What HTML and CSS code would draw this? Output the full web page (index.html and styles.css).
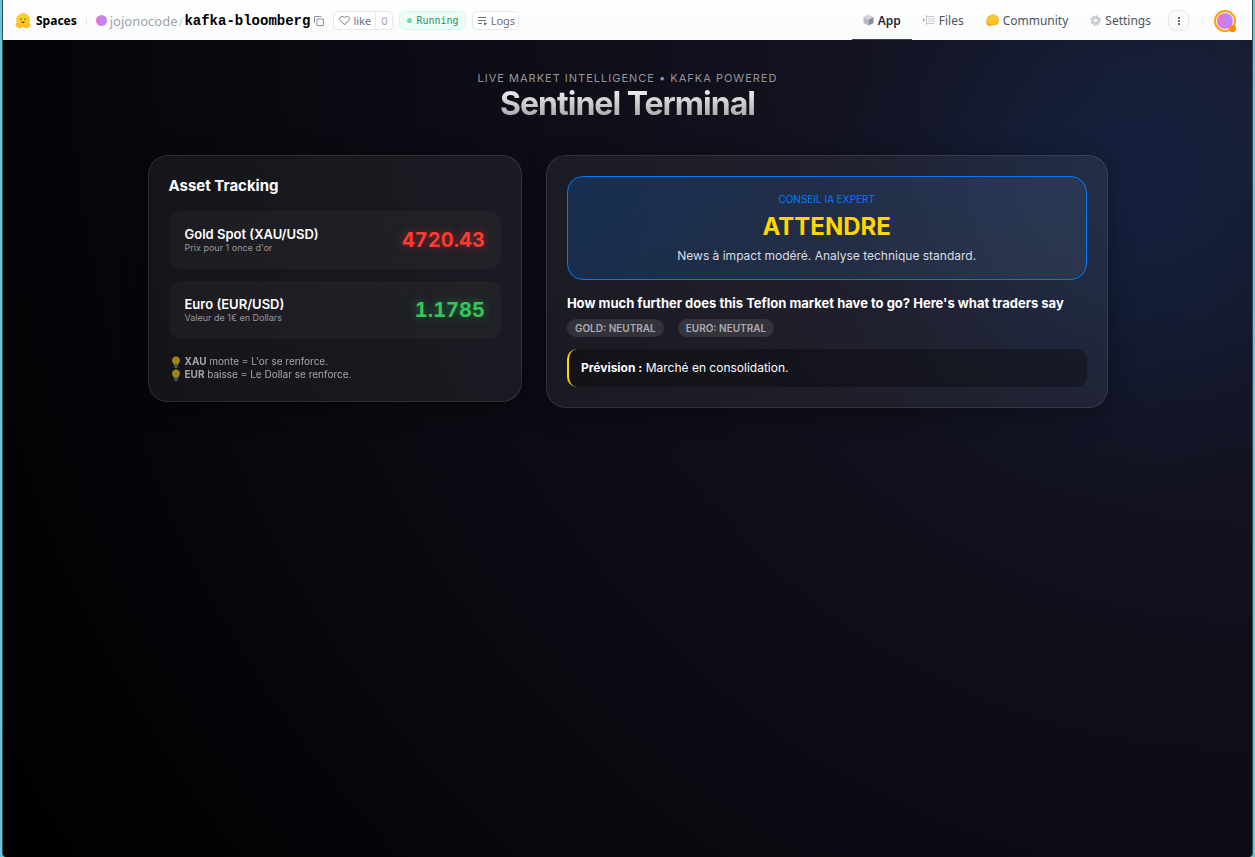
FILE: index.html
```
<!DOCTYPE html>
<html lang="fr">
<head>
    <meta charset="UTF-8">
    <meta name="viewport" content="width=device-width, initial-scale=1.0">
    <title>Sentinel Terminal</title>
    <link rel="stylesheet" href="styles.css">
</head>
<body>
<div class="window">
    <header class="topbar">
        <div class="repo">
            <a class="spaces" href="#">
                <svg width="16" height="16" viewBox="0 0 16 16">
                    <circle cx="8" cy="7" r="6.4" fill="#ffd21e" stroke="#ffad1f" stroke-width=".7"/>
                    <circle cx="5.9" cy="6" r=".8" fill="#3a3b45"/>
                    <circle cx="10.1" cy="6" r=".8" fill="#3a3b45"/>
                    <path d="M6 8.2Q8 9.2 10 8.2Q9.7 10.2 8 10.2T6 8.2" fill="#5a3030"/>
                    <path d="M1 10.4Q.4 12 1.2 12.6Q1.2 14.6 4.4 15Q7.4 15.2 7.2 12.8Q6.4 11.2 5 10.6L4.4 12L2.6 10Z" fill="#ffc02a" stroke="#ffa51c" stroke-width=".4"/>
                    <path d="M15 10.4Q15.6 12 14.8 12.6Q14.8 14.6 11.6 15Q8.6 15.2 8.8 12.8Q9.6 11.2 11 10.6L11.6 12L13.4 10Z" fill="#ffc02a" stroke="#ffa51c" stroke-width=".4"/>
                </svg>
                Spaces
            </a>
            <span class="divider"></span>
            <span class="owner-dot"></span>
            <a class="owner" href="#">jojonocode</a>
            <span class="slash">/</span>
            <a class="repo-name" href="#">kafka-bloomberg</a>
            <button class="copy" aria-label="Copy">
                <svg width="10" height="10" viewBox="0 0 10 10" fill="none" stroke="#8b93a1">
                    <path d="M3 3H9.5V9.5H3Z"/>
                    <path d="M1 7H.5V.5H7V1"/>
                </svg>
            </button>
            <div class="like">
                <button class="like-btn">
                    <svg width="11" height="11" viewBox="0 0 11 11" fill="none" stroke="#6b7280">
                        <path d="M5.5 9.8L1.3 5.6C.2 4.4.4 2.7 1.5 1.9C2.9.9 4.5 1.4 5.5 2.8C6.5 1.4 8.1.9 9.5 1.9C10.6 2.7 10.8 4.4 9.7 5.6Z"/>
                    </svg>
                    like
                </button>
                <button class="like-count">0</button>
            </div>
            <div class="running"><span class="dot"></span>Running</div>
            <button class="logs">
                <svg width="10" height="10" viewBox="0 0 10 10" fill="none" stroke="#6b7280">
                    <path d="M0 1.5H8M0 4.5H8M0 7.5H4"/>
                    <path d="M6 6V9.5L9.5 7.8Z" fill="#6b7280" stroke="none"/>
                </svg>
                Logs
            </button>
        </div>
        <nav class="tabs">
            <a class="tab active" href="#">
                <svg width="11" height="12" viewBox="0 0 11 12">
                    <path d="M5.5.5L10.5 3L5.5 5.8L.5 3Z" fill="#d1d5db"/>
                    <path d="M.5 3L5.5 5.8V11.5L.5 9Z" fill="#b4bac4"/>
                    <path d="M10.5 3L5.5 5.8V11.5L10.5 9Z" fill="#858d9a"/>
                </svg>
                App
            </a>
            <a class="tab" href="#">
                <svg width="12" height="10" viewBox="0 0 12 10" fill="none" stroke="#c3c8d0">
                    <path d="M3.5 0V10M3.5 1.5H11M5 4H12M5 6.2H12M3.5 8.5H11"/>
                    <path d="M0 3L2 5L0 7Z" fill="#9ca3af" stroke="none"/>
                </svg>
                Files
            </a>
            <a class="tab" href="#">
                <svg width="13" height="12" viewBox="0 0 13 12">
                    <path d="M.8 8.3Q.2 6.8 1.5 4.7Q1.8 2.2 4.2 1.7Q6.6-.2 8.8 1.3Q11.4 1.4 11.8 4.2Q13.2 6.5 12.2 8.5Q11.6 11 8 10.6L3 11.4Q.6 11.2.8 8.3Z" fill="#ffc62b" stroke="#ffa51c" stroke-width=".8"/>
                    <path d="M.8 8.3Q.6 11.2 3 11.4L8 10.6Q11.6 11 12.2 8.5Q9.6 10.2 7 9.6Q4.2 10.8 3 9.4Q1.4 9 .8 8.3Z" fill="#ff9d0b"/>
                </svg>
                Community
            </a>
            <a class="tab" href="#">
                <svg width="11" height="11" viewBox="0 0 11 11" fill="none" stroke="#c5cad2">
                    <circle cx="5.5" cy="5.5" r="2.8" stroke-width="2.2"/>
                    <circle cx="5.5" cy="5.5" r="4.5" stroke-width="1.8" stroke-dasharray="2 1.534"/>
                </svg>
                Settings
            </a>
            <button class="more" aria-label="More">
                <svg width="4" height="10" viewBox="0 0 4 10" fill="#374151">
                    <circle cx="2" cy="2" r="1"/>
                    <circle cx="2" cy="5" r="1"/>
                    <circle cx="2" cy="8" r="1"/>
                </svg>
            </button>
            <span class="divider"></span>
            <button class="avatar" aria-label="Account"><span class="badge"></span></button>
        </nav>
    </header>

    <main class="app">
        <div class="container">
            <div class="hero">
                <div class="subtitle">LIVE MARKET INTELLIGENCE • KAFKA POWERED</div>
                <h1>Sentinel Terminal</h1>
            </div>
            <div class="grid">
                <section class="card">
                    <h2>Asset Tracking</h2>
                    <div class="asset">
                        <div>
                            <div class="asset-name">Gold Spot (XAU/USD)</div>
                            <div class="asset-desc">Prix pour 1 once d'or</div>
                        </div>
                        <div class="price down">4720.43</div>
                    </div>
                    <div class="asset">
                        <div>
                            <div class="asset-name">Euro (EUR/USD)</div>
                            <div class="asset-desc">Valeur de 1€ en Dollars</div>
                        </div>
                        <div class="price up">1.1785</div>
                    </div>
                    <div class="hints">
                        <div class="hint">
                            <svg width="14" height="12" viewBox="0 0 14 12">
                                <path d="M7 .2A4.2 4.2 0 0 1 10 7L9 8.8H5L4 7A4.2 4.2 0 0 1 7 .2Z" fill="#fdd01c"/>
                                <path d="M5 8.6H9V10.4L8 12H6L5 10.4Z" fill="#5d8796"/>
                            </svg>
                            <span><b>XAU</b> monte = L'or se renforce.</span>
                        </div>
                        <div class="hint">
                            <svg width="14" height="12" viewBox="0 0 14 12">
                                <path d="M7 .2A4.2 4.2 0 0 1 10 7L9 8.8H5L4 7A4.2 4.2 0 0 1 7 .2Z" fill="#fdd01c"/>
                                <path d="M5 8.6H9V10.4L8 12H6L5 10.4Z" fill="#5d8796"/>
                            </svg>
                            <span><b>EUR</b> baisse = Le Dollar se renforce.</span>
                        </div>
                    </div>
                </section>

                <section class="card">
                    <div class="advice">
                        <div class="advice-label">CONSEIL IA EXPERT</div>
                        <div class="advice-value">ATTENDRE</div>
                        <div class="advice-text">News à impact modéré. Analyse technique standard.</div>
                    </div>
                    <h3>How much further does this Teflon market have to go? Here's what traders say</h3>
                    <div class="tags">
                        <span class="tag">GOLD: NEUTRAL</span>
                        <span class="tag">EURO: NEUTRAL</span>
                    </div>
                    <div class="forecast"><b>Prévision :</b> Marché en consolidation.</div>
                </section>
            </div>
        </div>
    </main>
</div>
</body>
</html>
```
FILE: styles.css
```
* {
    box-sizing: border-box;
}

body {
    margin: 0;
    padding: 0 2px;
    background: #5ccbe0;
    font-family: Inter, sans-serif;
}

button {
    padding: 0;
    border: none;
    background: none;
    font: inherit;
    color: inherit;
    cursor: pointer;
}

a {
    color: inherit;
    text-decoration: none;
}

svg {
    flex-shrink: 0;
}

.window {
    display: flex;
    flex-direction: column;
    min-height: 100vh;
    border: solid #45484c;
    border-width: 0 1px;
    border-radius: 0 0 4px 4px;
    overflow: hidden;
}

/* top bar */
.topbar {
    display: flex;
    justify-content: space-between;
    height: 40px;
    padding: 1px 16px 0 12px;
    background: linear-gradient(#fff, #f9fafb);
    font-family: "Noto Sans", sans-serif;
    font-size: 12px;
    color: #4b5563;
}

.repo, .tabs, .spaces, .like, .like-btn, .logs, .running, .tab {
    display: flex;
    align-items: center;
}

.spaces {
    gap: 5px;
    font-weight: bold;
    color: #000;
}

.divider {
    width: 1px;
    height: 6px;
    background: #e5e7eb;
}

.repo .divider {
    margin: 0 9px;
}

.owner-dot {
    width: 11px;
    height: 11px;
    margin-right: 3px;
    border-radius: 50%;
    background: linear-gradient(100deg, #f472b6, #c084fc 60%);
}

.owner {
    font-size: 13px;
    color: #9ca3af;
}

.slash {
    margin: 0 1px;
    font-size: 13px;
    color: #d1d5db;
}

.repo-name {
    font-family: "Liberation Mono", monospace;
    font-size: 14px;
    font-weight: bold;
    color: #000;
}

.copy {
    display: flex;
    margin: 0 9px 0 4px;
}

.like, .logs {
    height: 19px;
    border: 1px solid #e5e7eb;
    border-radius: 5px;
    background: #fff;
    font-size: 11px;
    color: #6b7280;
}

.like-btn {
    gap: 3px;
    padding: 0 4px 0 5px;
}

.like-count {
    height: 100%;
    padding: 0 5px;
    border-left: 1px solid #e5e7eb;
    color: #9ca3af;
}

.running {
    gap: 4px;
    height: 19px;
    margin: 0 6px;
    padding: 0 6px 0 7px;
    border: 1px solid #d1fae5;
    border-radius: 7px;
    background: #ecfdf5;
    font-family: "DejaVu Sans Mono", monospace;
    font-size: 10px;
    color: #2f8f6b;
}

.dot {
    width: 5px;
    height: 5px;
    border-radius: 50%;
    background: #6ddcb0;
}

.logs {
    gap: 3px;
    padding: 0 3px 0 5px;
}

.tab {
    gap: 4px;
    height: 100%;
    padding: 0 11px;
    border-bottom: 1px solid transparent;
}

.tab.active {
    border-bottom-color: #374151;
    font-weight: 600;
    color: #1f2937;
}

.more {
    display: flex;
    align-items: center;
    justify-content: center;
    width: 21px;
    height: 21px;
    margin: 0 13px 0 6px;
    border: 1px solid #e5e7eb;
    border-radius: 7px;
    background: #fafafb;
}

.avatar {
    position: relative;
    width: 22px;
    height: 22px;
    margin-left: 11px;
    padding: 1px;
    border: 2px solid #ff9d0b;
    border-radius: 50%;
    background: linear-gradient(100deg, #f472b6, #c084fc 60%) content-box #fff;
}

.badge {
    position: absolute;
    right: -2px;
    bottom: -2px;
    width: 7px;
    height: 7px;
    border-radius: 3px;
    background: #ff8a00;
}

/* app */
.app {
    flex: 1;
    padding: 32px 20px;
    background:
        radial-gradient(circle at calc(100% - 130px) 165px, rgba(0, 122, 255, 0.1), rgba(0, 122, 255, 0.08) 100px, rgba(0, 122, 255, 0.03) 200px, transparent 300px),
        radial-gradient(circle at top right, #1a1a2e, #000);
    color: #fff;
}

.container {
    max-width: 960px;
    margin: 0 auto;
}

.hero {
    margin-bottom: 32px;
    text-align: center;
}

.subtitle {
    font-size: 11px;
    line-height: 12px;
    letter-spacing: 1px;
    color: #96969c;
}

h1 {
    margin: 0;
    font-size: 32px;
    line-height: 39px;
    letter-spacing: -1px;
    background: linear-gradient(#fff, #999);
    -webkit-background-clip: text;
    background-clip: text;
    color: transparent;
}

.grid {
    display: grid;
    grid-template-columns: 1fr 1.5fr;
    align-items: start;
    gap: 24px;
}

.card {
    padding: 20px;
    border: 1px solid rgba(255, 255, 255, 0.1);
    border-radius: 20px;
    background: rgba(255, 255, 255, 0.06);
    box-shadow: 0 6px 26px rgba(0, 0, 0, 0.37);
}

h2 {
    margin: 0 0 16px;
    font-size: 15px;
    line-height: 19px;
}

.asset {
    display: flex;
    justify-content: space-between;
    align-items: center;
    height: 58px;
    margin-bottom: 12px;
    padding: 0 16px;
    border-radius: 13px;
    background: rgba(255, 255, 255, 0.03);
}

.asset-name {
    font-size: 13px;
    line-height: 15px;
    font-weight: 600;
}

.asset-desc {
    font-size: 9px;
    line-height: 11px;
    color: #98989d;
}

.price {
    font-size: 20px;
    font-weight: bold;
    font-variant-numeric: tabular-nums;
}

.down {
    color: #ff3b30;
    text-shadow: 0 0 10px rgba(255, 59, 48, 0.5);
}

.up {
    color: #34c759;
    text-shadow: 0 0 10px rgba(52, 199, 89, 0.5);
}

.hints {
    margin-top: 16px;
    font-size: 10px;
    line-height: 13px;
    opacity: 0.6;
}

.hint {
    display: flex;
    align-items: center;
    gap: 2px;
}

.advice {
    margin-bottom: 16px;
    padding: 16px;
    border: 1px solid #007aff;
    border-radius: 16px;
    background: linear-gradient(135deg, rgba(0, 122, 255, 0.2), rgba(255, 255, 255, 0.05));
    text-align: center;
}

.advice-label {
    font-size: 10px;
    line-height: 12px;
    color: #007aff;
}

.advice-value {
    margin: 5px 0 4px;
    font-size: 24px;
    line-height: 34px;
    font-weight: bold;
    color: #ffd600;
}

.advice-text {
    font-size: 12px;
    line-height: 15px;
    color: #dadde3;
}

h3 {
    margin: 0 0 8px;
    font-size: 13px;
    line-height: 15px;
}

.tags {
    display: flex;
    gap: 14px;
    margin-bottom: 12px;
}

.tag {
    padding: 0 8px;
    border-radius: 9px;
    background: rgba(255, 255, 255, 0.1);
    font-size: 10px;
    line-height: 18px;
    font-weight: 600;
    color: #acacb2;
}

.forecast {
    padding: 12px;
    border-left: 2px solid #ffd600;
    border-radius: 10px;
    background: rgba(0, 0, 0, 0.3);
    font-size: 12px;
    line-height: 14px;
}
```
